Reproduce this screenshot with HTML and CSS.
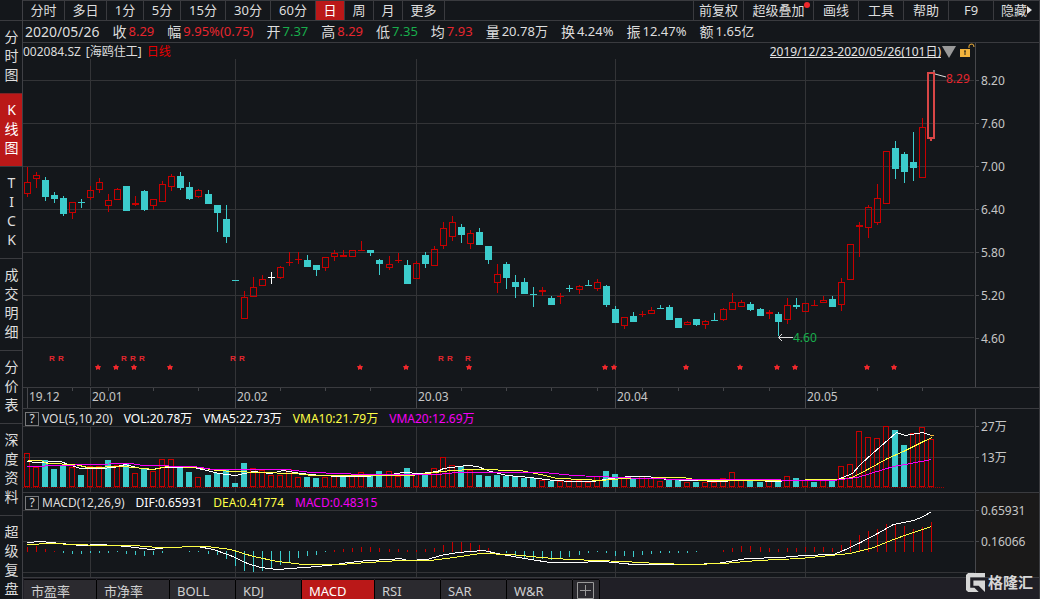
FILE: index.html
```html
<!DOCTYPE html>
<html lang="zh-CN">
<head>
<meta charset="utf-8">
<title>002084.SZ 海鸥住工 日线</title>
<link rel="stylesheet" href="styles.css">
</head>
<body>
<div class="app">
  <nav class="side" aria-label="视图">
    <button class="side-item"><span>分</span><span>时</span><span>图</span></button>
    <button class="side-item active"><span>K</span><span>线</span><span>图</span></button>
    <button class="side-item"><span>T</span><span>I</span><span>C</span><span>K</span></button>
    <button class="side-item"><span>成</span><span>交</span><span>明</span><span>细</span></button>
    <button class="side-item"><span>分</span><span>价</span><span>表</span></button>
    <button class="side-item"><span>深</span><span>度</span><span>资</span><span>料</span></button>
    <button class="side-item"><span>超</span><span>级</span><span>复</span><span>盘</span></button>
  </nav>
  <main class="main">
    <header class="toolbar">
      <button class="tool w-l">分时</button>
      <button class="tool w-l">多日</button>
      <button class="tool w-m">1分</button>
      <button class="tool w-m">5分</button>
      <button class="tool w-xl">15分</button>
      <button class="tool w-xl">30分</button>
      <button class="tool w-xl">60分</button>
      <button class="tool w-s active">日</button>
      <button class="tool w-s">周</button>
      <button class="tool w-s">月</button>
      <button class="tool w-l">更多</button>
      <span class="spacer"></span>
      <button class="tool w-3">前复权</button>
      <button class="tool w-4">超级叠加<i class="dot"></i></button>
      <button class="tool w-xl">画线</button>
      <button class="tool w-xl">工具</button>
      <button class="tool w-xl">帮助</button>
      <button class="tool w-xl">F9</button>
      <button class="tool w-xl last">隐藏<svg class="more" width="5" height="8" viewBox="0 0 5 8"><path d="M0 0L5 4L0 8Z" fill="#e4e4e4"/></svg></button>
    </header>
    <dl class="quote">
      <div class="q date"><dd>2020/05/26</dd></div>
      <div class="q"><dt>收</dt><dd class="up">8.29</dd></div>
      <div class="q"><dt>幅</dt><dd class="up">9.95%(0.75)</dd></div>
      <div class="q"><dt>开</dt><dd class="down">7.37</dd></div>
      <div class="q"><dt>高</dt><dd class="up">8.29</dd></div>
      <div class="q"><dt>低</dt><dd class="down">7.35</dd></div>
      <div class="q"><dt>均</dt><dd class="up">7.93</dd></div>
      <div class="q"><dt>量</dt><dd>20.78万</dd></div>
      <div class="q"><dt>换</dt><dd>4.24%</dd></div>
      <div class="q"><dt>振</dt><dd>12.47%</dd></div>
      <div class="q"><dt>额</dt><dd>1.65亿</dd></div>
    </dl>
    <section class="panel">
      <div class="plot">
        <div class="price-head">
          <span>002084.SZ</span>
          <span>[海鸥住工]</span>
          <span class="period">日线</span>
          <span class="spacer"></span>
          <a class="range" href="#">2019/12/23-2020/05/26(101日)</a>
          <svg width="34" height="16" viewBox="941 43 34 16">
            <path d="M942 46H956L949 58Z" fill="#9a9a9a"/>
            <path d="M960 49H970V57H960Z" fill="#f2b33d"/>
            <path d="M965 51V55M964 51H966" stroke="#2a2418" stroke-width="1"/>
            <path d="M969 48V46Q969 44 972 44Q974 44 974 47" fill="none" stroke="#f2b33d" stroke-width="1"/>
          </svg>
        </div>
        <svg class="chart" id="price" height="328" viewBox="23 59 952 328" preserveAspectRatio="none"></svg>
      </div>
      <div class="scale scale-price"><span>8.20</span><span>7.60</span><span>7.00</span><span>6.40</span><span>5.80</span><span>5.20</span><span>4.60</span></div>
    </section>
    <div class="panel time">
      <svg class="chart" id="time" height="20" viewBox="23 388 952 20" preserveAspectRatio="none"></svg>
    </div>
    <section class="panel">
      <div class="plot">
        <div class="ind-head"><button class="help">?</button><span class="name">VOL(5,10,20)</span><span class="white">VOL:20.78万</span><span class="white">VMA5:22.73万</span><span class="yellow">VMA10:21.79万</span><span class="pink">VMA20:12.69万</span></div>
        <svg class="chart" id="vol" height="66" viewBox="23 426 952 66" preserveAspectRatio="none"></svg>
      </div>
      <div class="scale scale-ind"><span>27万</span><span>13万</span></div>
    </section>
    <section class="panel">
      <div class="plot">
        <div class="ind-head"><button class="help">?</button><span class="name">MACD(12,26,9)</span><span class="white">DIF:0.65931</span><span class="yellow">DEA:0.41774</span><span class="pink">MACD:0.48315</span></div>
        <svg class="chart" id="macd" height="67" viewBox="23 510 952 67" preserveAspectRatio="none"></svg>
      </div>
      <div class="scale scale-ind dim"><span>0.65931</span><span>0.16066</span></div>
    </section>
    <footer class="tabs">
      <button class="tab t-l">市盈率</button>
      <button class="tab t-l">市净率</button>
      <button class="tab">BOLL</button>
      <button class="tab">KDJ</button>
      <button class="tab t-l active">MACD</button>
      <button class="tab">RSI</button>
      <button class="tab">SAR</button>
      <button class="tab">W&amp;R</button>
      <button class="tab add" aria-label="添加指标"><svg width="17" height="17" viewBox="0 0 17 17"><path d="M.5 .5H16.5V16.5H.5ZM3 8.5H14M8.5 3V14" fill="none" stroke="#9a9a9a"/></svg></button>
    </footer>
  </main>
  <div class="brand">
    <svg width="19" height="19" viewBox="0 0 18 18"><path d="M2 0H18V4H4V14H8L12 18H2L0 16V2Z" fill="#d6d6d6"/><path d="M7 7H18V18L12 12H7Z" fill="#d6d6d6"/></svg>
    <span>格隆汇</span>
  </div>
</div>
<script src="chart.js"></script>
</body>
</html>
```
FILE: styles.css
```css
* { box-sizing: border-box; }
body {
  margin: 0;
  background: #14171b;
  color: #dedede;
  font: 12px/16px "Noto Sans", "Noto Sans CJK SC", sans-serif;
}
button {
  margin: 0;
  padding: 0;
  border: 0;
  border-radius: 0;
  background: none;
  color: inherit;
  font: inherit;
}
.app {
  position: relative;
  display: flex;
  height: 100vh;
  overflow: hidden;
  border-right: 1px solid #3a3b3f;
}
.side {
  flex: none;
  width: 23px;
  padding-top: 20px;
  border-right: 1px solid #3f4045;
  overflow: hidden;
}
.side-item {
  display: block;
  width: 100%;
  padding: 6px 1px 9px 2px;
  border-top: 1px solid #3a3b3f;
  font-size: 14px;
  line-height: 19px;
}
.side-item span { display: block; }
.side-item.active {
  background: #ba1818;
  color: #fff;
  border-color: #7c2225;
}
.main {
  flex: 1;
  min-width: 0;
  display: flex;
  flex-direction: column;
}
.toolbar {
  display: flex;
  height: 21px;
  border-top: 1px solid #3a3b3f;
  border-bottom: 1px solid #3a3b3f;
  font-size: 13px;
}
.tool {
  position: relative;
  flex: none;
  white-space: nowrap;
  line-height: 19px;
  border-right: 1px solid #3a3b3f;
}
.tool.active { background: #ba1818; color: #fff; }
.tool.last { border-right: 0; }
.spacer { flex: 1; }
.toolbar .spacer { border-right: 1px solid #3a3b3f; }
.w-s { width: 29px; }
.w-m { width: 37px; }
.w-l { width: 42px; }
.w-xl { width: 45px; }
.w-3 { width: 50px; }
.w-4 { width: 70px; }
.dot {
  position: absolute;
  top: 1px;
  right: 3px;
  width: 6px;
  height: 6px;
  border-radius: 50%;
  background: #f0282c;
}
.more { vertical-align: 1px; }
.quote {
  display: flex;
  gap: 13px;
  height: 22px;
  margin: 0;
  padding-left: 2px;
  border-bottom: 1px solid #3a3b3f;
  line-height: 21px;
  white-space: nowrap;
}
.q { display: flex; gap: 2px; }
.q dt { font-size: 14px; }
.q dd { margin: 0; font-size: 13px; }
.q.date dd { font-size: 14px; }
.up { color: #e6262e; }
.down { color: #18ae4c; }
.panel {
  display: grid;
  grid-template-columns: minmax(0, 1fr) 64px;
  border-bottom: 1px solid #3a3b3f;
}
.chart { display: block; width: 100%; }
.price-head {
  display: flex;
  height: 16px;
  gap: 5px;
  line-height: 17px;
  white-space: nowrap;
}
.price-head svg { flex: none; margin-left: -5px; }
.period { color: #e60000; }
.range {
  color: #e4e4e4;
  height: 15px;
  line-height: 17px;
  text-decoration: none;
  border-bottom: 1px solid #e4e4e4;
}
.scale {
  display: flex;
  flex-direction: column;
  border-left: 1px solid #46474b;
  color: #c6c6c6;
}
.scale span { display: flex; align-items: center; gap: 2px; }
.scale span::before { content: ""; width: 3px; height: 1px; background: #46474b; }
.scale-price { padding-top: 16px; }
.scale-price span { height: 43px; }
.scale-ind { padding-top: 2px; }
.scale-ind span { height: 31px; }
.scale.dim { background: #1a1919; }
.ind-head {
  display: flex;
  align-items: center;
  gap: 11px;
  height: 17px;
  padding: 2px 0 0 2px;
  line-height: 15px;
  white-space: nowrap;
}
.help {
  width: 14px;
  height: 14px;
  margin-right: -8px;
  border: 1px solid #77787a;
  line-height: 12px;
}
.white { color: #fff; }
.yellow { color: #ffff46; }
.pink { color: #f400f4; }
.tabs {
  display: flex;
  flex: 1;
  gap: 1px;
  min-height: 21px;
  padding: 2px 0 0 1px;
  background: #201f26;
  font-size: 13px;
}
.tab {
  flex: none;
  width: 65px;
  padding-left: 7px;
  text-align: left;
  line-height: 22px;
  color: #cfcfcf;
  background: #2b2a2f;
  box-shadow: 1px 0 #000, 0 -1px #08080a;
}
.t-l { width: 72px; }
.tab.active { background: #ba1818; color: #fff; }
.tab.add { width: 26px; padding: 2px 0 0 4px; line-height: 0; }
.brand {
  position: absolute;
  right: 6px;
  bottom: 7px;
  display: flex;
  align-items: center;
  gap: 3px;
  color: #d6d6d6;
  font-size: 15px;
  font-weight: 700;
  line-height: 20px;
}
text { font: 12px "Noto Sans", sans-serif; }
text.r { font: bold 8px "Liberation Sans", sans-serif; fill: #e6262e; }
```
FILE: chart.js
```js
const RED = '#c80000', CYAN = '#3ccccc', GRID = '#333437';
const MONTHS = [90, 235, 416, 615, 805];
const xAt = i => 27 + 9 * i + Math.floor(0.0498 * i + 0.01);

// high, body top, body bottom, low, kind (r rise, c fall, w flat)
const candles = `167 182 194 197 r|172 175 179 188 r|177 180 197 201 c|192 195 199 203 c|196 198 214 216 c
202 202 213 219 r|199 202 203 208 c|186 190 198 200 r|178 182 190 193 r|194 200 206 212 r
188 189 200 200 r|186 186 211 211 c|196 203 205 206 r|190 191 210 211 c|199 199 206 210 r
181 184 202 202 r|174 176 187 191 r|172 176 188 190 c|182 187 199 200 c|189 190 197 198 r
190 194 204 204 c|205 205 213 232 c|205 219 237 243 c|280 280 281 281 c|291 297 319 319 r
277 287 297 297 r|275 279 286 286 r|272 277 278 284 w|266 267 278 279 r|252 262 263 266 r
252 259 260 264 r|255 260 267 267 c|265 265 270 276 c|257 257 268 271 r|250 253 257 261 r
250 255 257 257 r|250 250 257 257 r|241 250 251 251 r|250 250 253 256 c|259 260 264 275 c
256 264 268 270 r|253 260 261 263 r|260 265 284 284 c|261 263 279 279 r|252 255 264 268 c
246 249 266 266 r|222 228 246 249 r|216 222 237 241 r|224 227 235 243 c|230 233 244 249 r
228 232 245 245 c|246 246 260 264 c|264 274 283 293 r|262 264 278 289 c|275 282 287 298 c
278 282 294 294 c|287 294 295 307 c|287 290 292 296 r|296 298 305 305 c|293 296 297 304 r
285 288 289 292 c|285 286 290 294 r|280 285 286 286 c|279 282 289 291 r|285 286 305 307 c
306 309 323 323 c|317 317 326 329 r|312 316 322 322 c|311 314 315 317 r|307 310 314 314 r
305 308 309 309 c|305 307 320 320 c|318 318 328 328 c|321 322 325 325 r|319 319 325 326 c
320 321 325 329 r|313 320 321 321 c|308 309 320 321 r|293 302 310 310 r|300 302 307 307 r
302 304 310 311 c|308 309 316 316 c|310 312 314 319 r|312 314 322 336 c|298 305 320 324 r
298 305 307 309 c|303 303 312 312 r|300 305 306 306 r|296 300 303 303 r|296 299 307 307 c
278 282 305 311 r|244 244 280 280 r|222 225 227 257 r|205 207 228 238 r|184 198 223 225 r
151 151 204 204 r|141 148 169 179 c|152 154 172 183 c|132 162 168 181 c|118 127 178 178 r`
  .split(/[|\n]/).map(s => s.trim().split(' '));

const volTop = [453,467,460,469,466,467,475,466,466,460,465,464,473,469,471,459,459,466,472,477,
  475,473,469,483,463,468,470,475,475,469,477,477,478,477,476,476,476,472,475,471,
  471,476,468,473,474,468,457,465,466,470,475,476,475,476,476,478,478,480,481,481,
  480,480,482,476,471,474,478,478,476,478,481,479,479,482,482,482,482,478,472,480,
  480,482,481,481,476,478,480,482,480,481,466,464,431,437,438,426,430,445,433,427,439];
// r rise, c fall, one letter for each session
const volKind = 'rrcccrcrrc' + 'rcrcrrrccr' + 'cccccrrrrr' + 'rccrrcrrcc' + 'rrcrcrrrcr' +
  'cccccccrcr' + 'rrrrccrcrr' + 'rccrcrrrrr' + 'ccrcrcrcrc' + 'rrrrrrccrr' + 'r';

// end row of each histogram bar; 0 leaves a gap
const macdEnd = [547,546,549,551,553,554,554,553,553,553,552,554,555,556,555,553,0,0,552,552,
  554,555,559,566,571,572,571,569,565,563,558,556,555,552,550,549,548,547,547,548,
  549,549,550,550,549,548,545,542,542,543,545,548,0,553,556,558,559,559,560,559,
  557,555,553,552,553,556,556,557,555,554,553,553,553,553,552,0,0,550,548,546,
  546,547,548,549,548,548,547,547,547,548,545,540,535,531,529,524,524,526,529,527,522];

const lines = {
  dif: '27,542 40,541 50,542 60,543 80,545 100,544 127,546 150,549 167,547 197,546 213,549 230,555 247,563 260,567 277,569 290,568 317,566 337,564 340,563 367,560 390,559 400,558 407,560 427,559 440,555 457,552 483,550 497,553 513,556 530,559 550,562 573,562 603,561 633,564 657,564 690,564 717,563 747,558 780,557 803,555 833,554 843,550 860,542 877,533 893,524 903,522 913,520 923,516 931,511',
  dea: '27,544 50,543 100,545 133,545 157,547 207,546 230,549 253,556 277,561 303,564 340,564 367,562 400,560 430,560 453,557 480,553 510,554 540,557 570,559 623,561 657,563 690,564 723,563 757,560 800,558 830,555 850,553 873,547 893,539 907,534 931,526',
  ma5: '27,461 36,462 60,461 68,464 80,468 100,468 113,467 125,464 140,468 152,469 163,467 193,467 207,470 218,473 235,475 253,471 270,473 283,470 300,473 320,475 340,476 357,476 384,475 403,472 420,473 437,471 443,468 467,465 477,466 490,471 507,475 530,477 553,480 573,481 593,481 610,478 630,476 647,476 667,479 690,480 723,481 740,479 773,481 790,480 837,479 852,473 860,464 872,453 896,432 905,435 922,432 931,435',
  ma10: '27,460 40,460 47,463 75,464 87,467 123,466 153,469 167,466 197,467 217,470 233,471 260,472 293,473 313,475 350,475 410,475 427,473 450,470 473,469 520,470 540,474 557,478 583,479 600,480 623,478 683,477 700,480 740,480 790,480 820,479 837,479 852,477 867,469 887,458 903,451 923,441 932,437',
  ma20: '27,466 63,465 87,464 130,463 143,465 193,466 213,469 250,469 287,469 310,472 340,473 360,474 437,474 457,472 543,472 573,475 620,477 640,478 690,479 770,479 790,480 833,480 857,477 870,473 893,466 910,463 931,459'
};

const rect = (x, y, w, h, fill) => `<rect x="${x}" y="${y}" width="${w}" height="${h}" fill="${fill}"/>`;
const hollow = (x, y, w, h) => rect(x, y, w, 1, RED) + rect(x, y + h - 1, w, 1, RED) + rect(x, y, 1, h, RED) + rect(x + w - 1, y, 1, h, RED);
const label = (x, y, s, fill, cls = '') => `<text x="${x}" y="${y}" fill="${fill}" class="${cls}">${s}</text>`;
const poly = (pts, color) => `<polyline points="${pts}" fill="none" stroke="${color}" stroke-width="1" transform="translate(.5 .5)"/>`;
const crisp = s => `<g shape-rendering="crispEdges">${s}</g>`;
const grid = (rows, top, bottom) =>
  rows.map(y => rect(23, y, 951, 1, GRID)).join('') + MONTHS.map(x => rect(x, top, 1, bottom - top, GRID)).join('');

let s = grid([80, 123, 166, 209, 252, 295, 337], 59, 386);
candles.forEach(([hi, a, b, lo, kind], i) => {
  [hi, a, b, lo] = [+hi, +a, +b, +lo];
  const x = xAt(i), c = { r: RED, c: CYAN, w: '#fff' }[kind];
  s += rect(x, hi, 1, a - hi, c) + rect(x, b, 1, lo - b, c);
  s += kind === 'r' && b - a > 2 ? hollow(x - 3, a, 7, b - a) : rect(x - 3, a, 7, b - a, c);
});
s += '<rect x="928" y="73" width="6" height="65" fill="none" stroke="#d84646" stroke-width="2"/>' + rect(930, 139, 2, 2, '#d84646');
s = crisp(s);
s += '<path d="M934 72V70M935 74L946 77" stroke="#ddd" fill="none"/>' + label(946, 83, '8.29', '#e6262e');
s += '<path d="M793 337.5H779M782 334L778.5 337.5L782 341" stroke="#ddd" fill="none"/>' + label(793, 342, '4.60', '#18ae4c');
[49, 58, 121, 130, 139, 230, 239, 438, 447, 465].forEach(x => { s += label(x, 361, 'R', '#e6262e', 'r'); });
[98, 116, 134, 170, 360, 406, 469, 605, 614, 686, 740, 777, 795, 867, 894].forEach(x => {
  s += `<path transform="translate(${x} 367)" d="M0-3L1-1H3L2 1V3L0 2L-2 3V1L-3-1H-1Z" fill="#f0282c"/>`;
});
document.getElementById('price').innerHTML = s;

s = [27, ...MONTHS].map(x => rect(x, 388, 1, 20, '#46474b')).join('');
s += [72, 108, 153, 198, 280, 325, 370, 461, 506, 551, 597, 642, 678, 723, 769, 832, 877, 922].map(x => rect(x, 388, 1, 3, '#46474b')).join('');
s = crisp(s);
[[29, '19.12'], [92, '20.01'], [237, '20.02'], [418, '20.03'], [617, '20.04'], [807, '20.05']].forEach(([x, t]) => { s += label(x, 401, t, '#c6c6c6'); });
document.getElementById('time').innerHTML = s;

s = grid([426, 457], 427, 492);
s += '<path d="M23 487.5H944" stroke="#a00000" stroke-dasharray="1 1"/>';
volTop.forEach((y, i) => {
  const x = xAt(i) - 3;
  s += volKind[i] === 'r' ? hollow(x, y, 6, 487 - y) : rect(x, y, 6, 487 - y, CYAN);
});
s += poly(lines.ma5, '#fff') + poly(lines.ma10, '#ffff46') + poly(lines.ma20, '#f400f4') + rect(930, 435, 4, 1, '#f2b33d');
document.getElementById('vol').innerHTML = crisp(s);

s = grid([510, 541, 572], 511, 577);
macdEnd.forEach((y, i) => {
  if (!y) return;
  s += y < 552 ? rect(xAt(i), y, 1, 552 - y, RED) : rect(xAt(i), 551, 1, y - 551, CYAN);
});
s += poly(lines.dif, '#fff') + poly(lines.dea, '#ffff46');
document.getElementById('macd').innerHTML = crisp(s);
```
